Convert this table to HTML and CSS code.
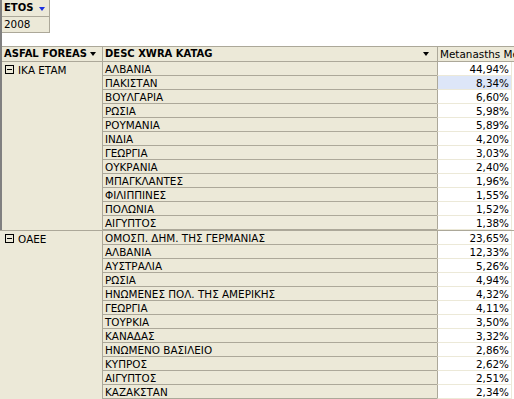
FILE: index.html
```html
<!DOCTYPE html>
<html>
<head>
<meta charset="utf-8">
<link rel="stylesheet" href="styles.css">
</head>
<body>
<div class="sheet">
  <div class="upper">
    <div class="filter">
      <div class="fhead">ETOS <span class="arrow blue"></span></div>
      <div class="fval">2008</div>
    </div>
    <div class="head">
      <div class="hc c1"><span>ASFAL FOREAS</span><span class="arrow"></span></div>
      <div class="hc c2"><span>DESC XWRA KATAG</span><span class="arrow"></span></div>
      <div class="hc c3"><span class="norm">Metanasths Me</span></div>
    </div>
    <div class="group">
      <div class="g1"><svg class="minus" width="9" height="9" viewBox="0 0 9 9"><rect x="0.5" y="0.5" width="8" height="8" fill="none" stroke="#000"/><line x1="2" y1="4.5" x2="7" y2="4.5" stroke="#000"/></svg>ΙΚΑ ETAM</div>
      <div class="d">ΑΛΒΑΝΙΑ</div><div class="v">44,94%</div>
      <div class="d">ΠΑΚΙΣΤΑΝ</div><div class="v sel">8,34%</div>
      <div class="d">ΒΟΥΛΓΑΡΙΑ</div><div class="v">6,60%</div>
      <div class="d">ΡΩΣΙΑ</div><div class="v">5,98%</div>
      <div class="d">ΡΟΥΜΑΝΙΑ</div><div class="v">5,89%</div>
      <div class="d">ΙΝΔΙΑ</div><div class="v">4,20%</div>
      <div class="d">ΓΕΩΡΓΙΑ</div><div class="v">3,03%</div>
      <div class="d">ΟΥΚΡΑΝΙΑ</div><div class="v">2,40%</div>
      <div class="d">ΜΠΑΓΚΛΑΝΤΕΣ</div><div class="v">1,96%</div>
      <div class="d">ΦΙΛΙΠΠΙΝΕΣ</div><div class="v">1,55%</div>
      <div class="d">ΠΟΛΩΝΙΑ</div><div class="v">1,52%</div>
      <div class="d">ΑΙΓΥΠΤΟΣ</div><div class="v">1,38%</div>
    </div>
  </div>
  <div class="group second">
    <div class="g1"><svg class="minus" width="9" height="9" viewBox="0 0 9 9"><rect x="0.5" y="0.5" width="8" height="8" fill="none" stroke="#000"/><line x1="2" y1="4.5" x2="7" y2="4.5" stroke="#000"/></svg>ΟΑΕΕ</div>
    <div class="d">ΟΜΟΣΠ. ΔΗΜ. ΤΗΣ ΓΕΡΜΑΝΙΑΣ</div><div class="v">23,65%</div>
    <div class="d">ΑΛΒΑΝΙΑ</div><div class="v">12,33%</div>
    <div class="d">ΑΥΣΤΡΑΛΙΑ</div><div class="v">5,26%</div>
    <div class="d">ΡΩΣΙΑ</div><div class="v">4,94%</div>
    <div class="d">ΗΝΩΜΕΝΕΣ ΠΟΛ. ΤΗΣ ΑΜΕΡΙΚΗΣ</div><div class="v">4,32%</div>
    <div class="d">ΓΕΩΡΓΙΑ</div><div class="v">4,11%</div>
    <div class="d">ΤΟΥΡΚΙΑ</div><div class="v">3,50%</div>
    <div class="d">ΚΑΝΑΔΑΣ</div><div class="v">3,32%</div>
    <div class="d">ΗΝΩΜΕΝΟ ΒΑΣΙΛΕΙΟ</div><div class="v">2,86%</div>
    <div class="d">ΚΥΠΡΟΣ</div><div class="v">2,62%</div>
    <div class="d">ΑΙΓΥΠΤΟΣ</div><div class="v">2,51%</div>
    <div class="d">ΚΑΖΑΚΣΤΑΝ</div><div class="v">2,34%</div>
  </div>
</div>
</body>
</html>
```

FILE: styles.css
```css
* { box-sizing: border-box; }
html, body { margin: 0; padding: 0; background: #fff; }
body {
  font-family: "DejaVu Sans", "Noto Sans", sans-serif;
  font-size: 10px;
  color: #000;
  width: 514px;
  height: 399px;
  overflow: hidden;
}
.sheet { width: 514px; }
.upper { border-left: 2px solid #808080; }
.filter { width: 48px; border-right: 1px solid #aca899; }
.fhead {
  height: 17px;
  background: #ece9d8;
  border-bottom: 1px solid #aca899;
  font-weight: bold;
  line-height: 16px;
  padding-left: 2px;
  display: flex;
  align-items: center;
  gap: 6px;
}
.fval {
  height: 16px;
  background: #ece9d8;
  border-bottom: 1px solid #aca899;
  font-size: 10.4px;
  line-height: 15px;
  padding-left: 2px;
}
.arrow {
  flex: none;
  width: 0; height: 0;
  border-left: 3.5px solid transparent;
  border-right: 3.5px solid transparent;
  border-top: 4px solid #000;
}
.arrow.blue { border-top-color: #1a2fe0; margin-top: 1px; }
.head {
  margin-top: 13px;
  display: grid;
  grid-template-columns: 100px 335px 77px;
  height: 16px;
  border-top: 1px solid #aca899;
  border-bottom: 1px solid #aca899;
  background: #ece9d8;
}
.hc {
  display: flex;
  align-items: center;
  justify-content: space-between;
  font-weight: bold;
  padding: 0 6px 0 2px;
  white-space: nowrap;
  overflow: hidden;
  line-height: 14px;
}
.hc.c2, .hc.c3 { border-left: 1px solid #aca899; }
.hc.c2 { padding-left: 2px; padding-right: 8px; }
.hc.c3 { padding-left: 2px; justify-content: flex-start; font-size: 10.4px; }
.norm { font-weight: normal; }
.group {
  display: grid;
  grid-template-columns: 100px 335px 75px;
  grid-auto-rows: 14px;
  font-size: 10.4px;
}
.group.second {
  grid-template-columns: 102px 335px 75px;
  border-top: 1px solid #aca899;
}
.g1 {
  grid-row: span 12;
  background: #ece9d8;
  display: flex;
  align-items: flex-start;
  padding: 3px 0 0 3px;
  gap: 4px;
  line-height: 10px;
}
.second .g1 { padding-left: 5px; }
.d {
  background: #ece9d8;
  border-left: 1px solid #aca899;
  border-bottom: 1px solid #aca899;
  padding: 1px 0 0 2px;
  line-height: 13px;
  white-space: nowrap;
}
.v {
  background: #fff;
  border-left: 1px solid #aca899;
  border-right: 1px solid #ece9d8;
  border-bottom: 1px solid #ece9d8;
  text-align: right;
  padding: 1px 2px 0 0;
  line-height: 13px;
}
.v.sel { background: #dde6f8; }
```
